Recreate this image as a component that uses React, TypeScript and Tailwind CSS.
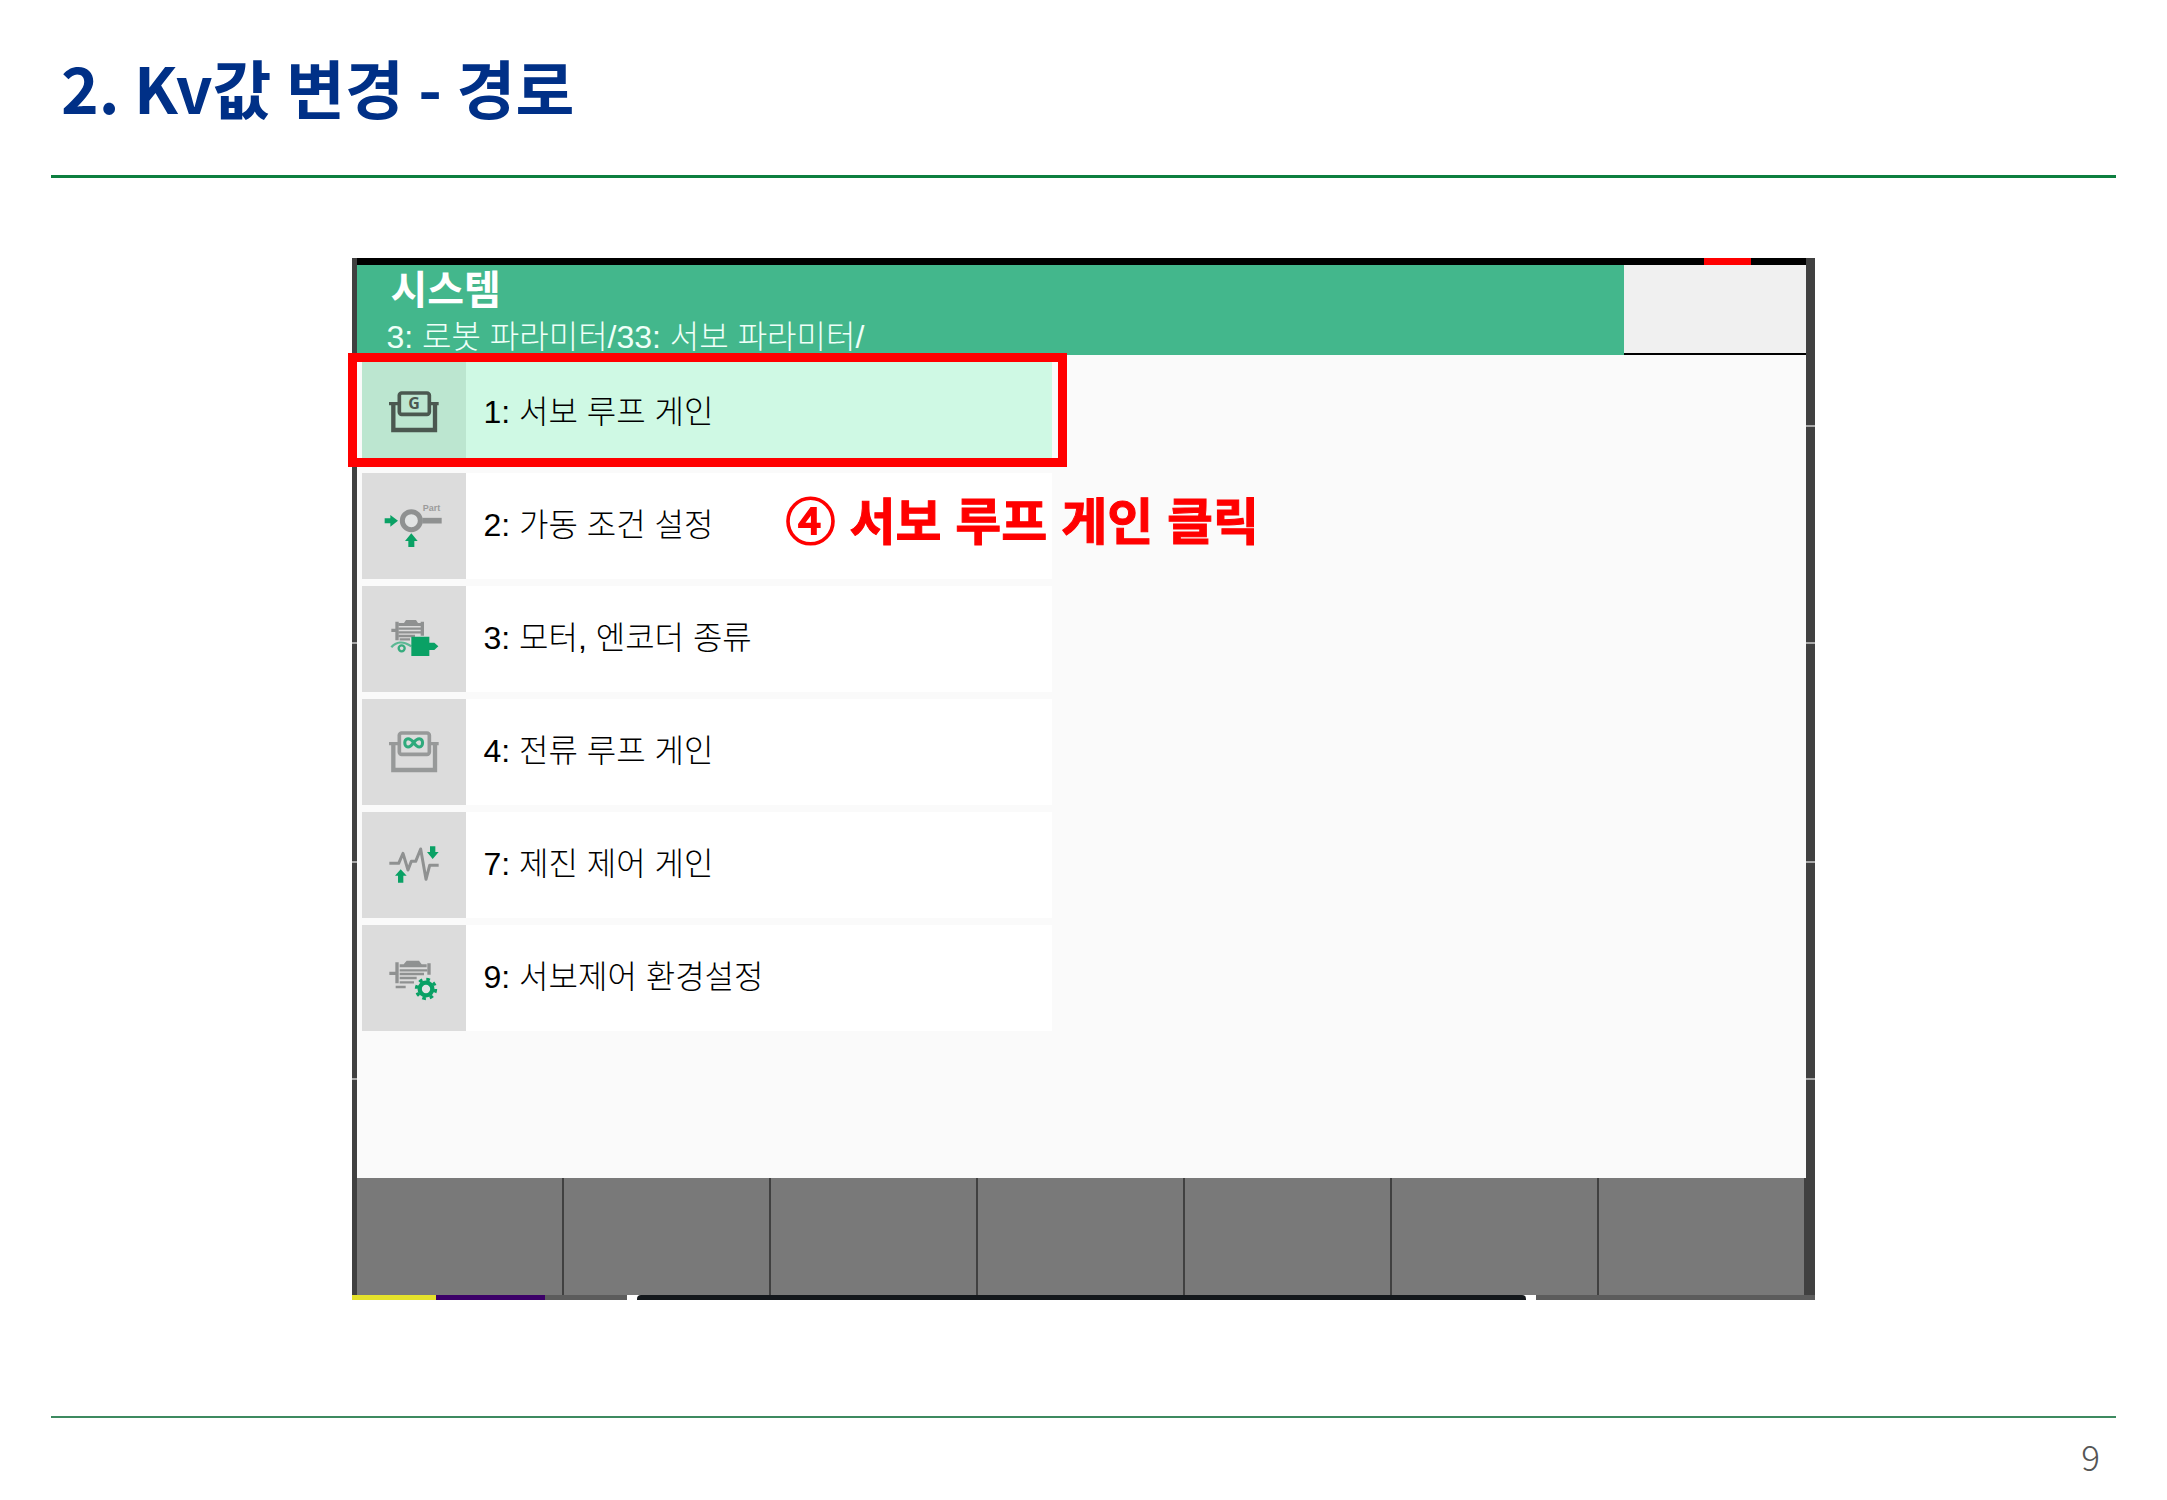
import type { ReactNode } from "react";

const GREEN = "#0aa165";
const GRAY = "#8f9191";

function Tile({ top, children }: { top: number; children: ReactNode }) {
  return (
    <svg aria-hidden="true" viewBox={`36 ${top} 312 318`} className="h-full w-full">
      {children}
    </svg>
  );
}

function DriveBox({ color }: { color: string }) {
  return (
    <g fill="none" stroke={color}>
      <rect x="148" y="129" width="90" height="64" rx="7" strokeWidth="11" />
      <path d="M117 161H146M240 161H266" strokeWidth="10" />
      <path d="M130 162V240H255V162" strokeWidth="13" />
    </g>
  );
}

function ServoGainIcon() {
  return (
    <Tile top={30}>
      <DriveBox color="#4b5850" />
      <text x="192" y="178" textAnchor="middle" fontSize="48" fontWeight="700" fill="#4b5850" fontFamily="'Noto Sans', sans-serif">
        G
      </text>
    </Tile>
  );
}

function ConditionIcon() {
  return (
    <Tile top={24}>
      <circle cx="184" cy="167" r="27" fill="#e2e4e4" stroke={GRAY} strokeWidth="15" />
      <path d="M217 167H275" stroke={GRAY} strokeWidth="17" />
      <text x="218" y="138" fontSize="27" fontWeight="700" fill="#9b9b9b" fontFamily="'Liberation Sans', Arial, sans-serif">
        Part
      </text>
      <path d="M104 160H121V150L144 167L121 185V175H104Z" fill={GREEN} />
      <path d="M184 205L203 228H193V246H175V228H165Z" fill={GREEN} />
    </Tile>
  );
}

function MotorPlugIcon() {
  return (
    <Tile top={17}>
      <path d="M124 150H145M141 124V180M217 124V166" stroke={GRAY} strokeWidth="10" />
      <path d="M145 128H162L168 119H198L204 128H213V137H145Z" fill={GRAY} />
      <path d="M145 145H213M145 156H213M145 167H195M149 177H180" stroke={GRAY} strokeWidth="7" />
      <path d="M124 201C138 184 160 181 184 198" fill="none" stroke="#5cb894" strokeWidth="7" />
      <circle cx="155" cy="204" r="9" fill="none" stroke="#37ac7e" strokeWidth="7" />
      <path d="M184 169H238V187H253L265 198L253 209H238V227H184Z" fill={GREEN} />
    </Tile>
  );
}

function CurrentGainIcon() {
  return (
    <Tile top={27}>
      <DriveBox color="#979999" />
      <path
        d="M191 158C184 148 179 146 174 146C161 146 161 171 174 171C179 171 184 168 191 158C198 148 203 146 208 146C221 146 221 171 208 171C203 171 198 168 191 158Z"
        fill="none"
        stroke="#2faa7c"
        strokeWidth="9"
      />
    </Tile>
  );
}

function VibrationIcon() {
  return (
    <Tile top={20}>
      <path
        d="M118 174H146L159 144L174 194L184 168H197L212 131L228 222L239 180H266"
        fill="none"
        stroke={GRAY}
        strokeWidth="9"
        strokeLinejoin="round"
      />
      <path d="M152 192L170 211H160V232H144V211H135Z" fill={GREEN} />
      <path d="M240 123H256V140H266L248 161L231 140H240Z" fill={GREEN} />
    </Tile>
  );
}

function MotorGearIcon() {
  return (
    <Tile top={31}>
      <path d="M118 176H145M141 143V206M237 146V180" stroke={GRAY} strokeWidth="10" />
      <path d="M149 149H161L170 138H207L215 149H230V158H149Z" fill={GRAY} />
      <path d="M149 167H232M149 178H222M149 190H200M149 203H192M137 217H167" stroke={GRAY} strokeWidth="7" />
      <circle cx="228" cy="223" r="29" fill="none" stroke={GREEN} strokeWidth="9" strokeDasharray="11 11.78" />
      <circle cx="228" cy="223" r="19" fill="#e2e4e4" stroke={GREEN} strokeWidth="13" />
    </Tile>
  );
}

const items = [
  { label: "1: 서보 루프 게인", icon: <ServoGainIcon />, active: true },
  { label: "2: 가동 조건 설정", icon: <ConditionIcon />, active: false },
  { label: "3: 모터, 엔코더 종류", icon: <MotorPlugIcon />, active: false },
  { label: "4: 전류 루프 게인", icon: <CurrentGainIcon />, active: false },
  { label: "7: 제진 제어 게인", icon: <VibrationIcon />, active: false },
  { label: "9: 서보제어 환경설정", icon: <MotorGearIcon />, active: false },
];

const softKeys = [1, 2, 3, 4, 5, 6, 7];

function Ticks({ side }: { side: "left" | "right" }) {
  const first = side === "right" ? "bg-[#a8a8a8]" : "bg-transparent";
  return (
    <div className={`absolute inset-y-0 flex flex-col pt-[167px] ${side === "left" ? "left-0 w-[5px]" : "right-0 w-[9px]"}`}>
      <div className={`h-[2px] ${first}`} />
      <div className="mt-[215px] h-[2px] bg-[#a8a8a8]" />
      <div className="mt-[217px] h-[2px] bg-[#a8a8a8]" />
      <div className="mt-[215px] h-[2px] bg-[#a8a8a8]" />
    </div>
  );
}

function MenuRow({ label, icon, active }: { label: string; icon: ReactNode; active: boolean }) {
  return (
    <button
      type="button"
      className={`flex h-[106px] w-full items-center text-left text-[32px] leading-[40px] text-black ${active ? "bg-[#cff9e4]" : "bg-white"}`}
    >
      <span className={`h-full w-[104px] shrink-0 ${active ? "bg-[#bce6d0]" : "bg-[#dcdcdc]"}`}>{icon}</span>
      <span className="pb-[2px] pl-[17px] whitespace-nowrap">{label}</span>
    </button>
  );
}

function Pendant() {
  return (
    <section className="relative">
      <div className="relative flex bg-[#404040] pr-[9px] pl-[5px]">
        <Ticks side="left" />
        <Ticks side="right" />
        <div className="min-w-0 flex-1">
          <div className="flex h-[7px] justify-end bg-black pr-[55px]">
            <div className="w-[47px] bg-[#ff0000]" />
          </div>
          <header className="flex h-[90px]">
            <div className="flex-1 bg-[#43b78c] pl-[29px] text-white">
              <h2 className="pt-[4px] pl-[4px] text-[40px] leading-[42px] font-bold">시스템</h2>
              <p className="text-[32px] leading-[52px] font-light whitespace-nowrap text-[#effff8]">
                3: 로봇 파라미터/33: 서보 파라미터/
              </p>
            </div>
            <div className="w-[182px] border-b-2 border-black bg-[#f0f0f0]" />
          </header>
          <div className="relative bg-[#fafafa] pt-[5px] pb-[147px] pl-[5px]">
            <nav aria-label="서보 파라미터" className="flex w-[690px] max-w-full flex-col gap-[7px] font-light">
              {items.map((item) => (
                <MenuRow key={item.label} {...item} />
              ))}
            </nav>
            <div className="pointer-events-none absolute top-[-2px] left-[-9px] h-[114px] w-[719px] border-[9px] border-[#ff0000]" />
            <p className="absolute top-[136px] left-[428px] text-[50px] leading-[64px] font-bold whitespace-nowrap text-[#ff0000] [-webkit-text-stroke:1px_#ff0000]">
              <span className="font-normal [-webkit-text-stroke:2px_#ff0000]">④</span> 서보 루프 게인 클릭
            </p>
          </div>
          <div className="grid h-[117px] grid-cols-7 gap-[2px] bg-[#404040] pr-[2px]">
            {softKeys.map((key) => (
              <button key={key} type="button" aria-label={`F${key}`} className="bg-[#797979]" />
            ))}
          </div>
        </div>
      </div>
      <div className="flex h-[5px] bg-[#5c5c5c]">
        <div className="w-[84px] bg-[#e5e22c]" />
        <div className="w-[109px] bg-[#3c0068]" />
        <div className="w-[82px]" />
        <div className="flex-1 bg-white px-[10px]">
          <div className="h-full rounded-t-sm bg-[#14181c]" />
        </div>
        <div className="w-[279px]" />
      </div>
    </section>
  );
}

export default function App() {
  return (
    <div className="flex min-h-screen flex-col bg-white px-[51px] font-['Liberation_Sans','Noto_Sans_CJK_KR',sans-serif]">
      <header className="h-[178px] border-b-[3px] border-[#0d7f3f] pt-[44px] pl-[10px]">
        <h1 className="font-['Noto_Sans_CJK_KR',sans-serif] text-[64px] leading-[84px] font-bold whitespace-nowrap text-[#003087]">
          2. Kv값 변경 - 경로
        </h1>
      </header>
      <main className="flex-1 px-[14.6%] pt-[80px]">
        <Pendant />
      </main>
      <footer className="h-[84px] border-t-2 border-[#3d8a60] pt-[16px] pr-[16px] text-right font-['Noto_Sans_CJK_KR',sans-serif] text-[35px] leading-[44px] font-light text-[#555555]">
        9
      </footer>
    </div>
  );
}
